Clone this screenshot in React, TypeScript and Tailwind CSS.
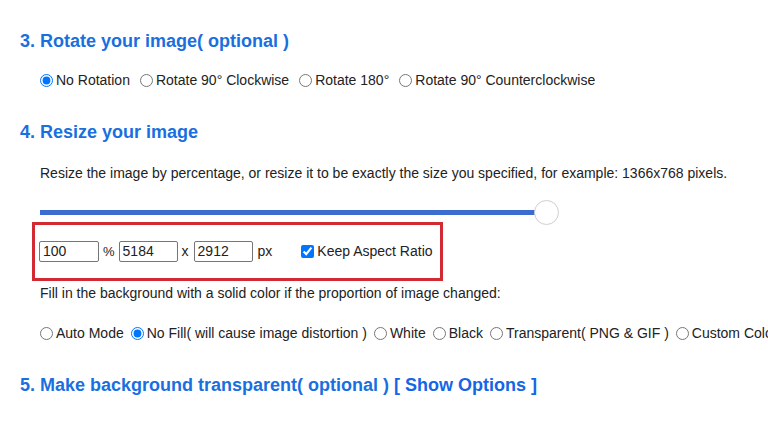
import React from "react";

const rotations = [
  { label: "No Rotation", checked: true },
  { label: "Rotate 90° Clockwise" },
  { label: "Rotate 180°" },
  { label: "Rotate 90° Counterclockwise" },
];

const fills = [
  { label: "Auto Mode" },
  { label: "No Fill( will cause image distortion )", checked: true },
  { label: "White" },
  { label: "Black" },
  { label: "Transparent( PNG & GIF )" },
  { label: "Custom Color" },
];

const Radio: React.FC<{ label: string; checked?: boolean; name: string }> = ({ label, checked, name }) => (
  <label className="flex items-center whitespace-nowrap">
    <input type="radio" name={name} defaultChecked={checked} className="m-0 w-[13px] h-[13px] mr-[3px]" />
    <span>{label}</span>
  </label>
);

const App: React.FC = () => {
  return (
    <div className="w-[768px] h-[432px] overflow-hidden bg-white text-[#222] pl-[20px] font-['Liberation_Sans',Arial,sans-serif]">
      {/* 3 */}
      <h3 className="mt-[30px] text-[18px] leading-[22px] font-bold text-[#1a6fe0]">3. Rotate your image( optional )</h3>
      <div className="mt-[20px] ml-[20px] flex gap-[10px] text-[14px] leading-[16px]">
        {rotations.map((r, i) => (
          <Radio key={i} name="rot" label={r.label} checked={r.checked} />
        ))}
      </div>

      {/* 4 */}
      <h3 className="mt-[33px] text-[18px] leading-[22px] font-bold text-[#1a6fe0]">4. Resize your image</h3>
      <p className="mt-[22px] ml-[20px] text-[14px] leading-[16px] whitespace-nowrap">
        Resize the image by percentage, or resize it to be exactly the size you specified, for example: 1366x768 pixels.
      </p>

      <div className="mt-[29px] ml-[20px] w-[505px] h-[5px] bg-[#3b6dd0] relative">
        <div className="absolute left-[494px] top-[-10px] w-[25px] h-[25px] rounded-full bg-white border-[1.5px] border-[#cfcfcf]" />
      </div>

      <div className="mt-[7px] ml-[12px] w-[411px] h-[59px] border-[3px] border-[#d12a33] flex items-center pl-[4px] text-[14px]">
        <input defaultValue="100" className="w-[60px] h-[21px] border border-[#767676] rounded-[2px] px-[3px] text-[14px]" />
        <span className="ml-[4px] mr-[4px] text-[13px]">%</span>
        <input defaultValue="5184" className="w-[59px] h-[21px] border border-[#767676] rounded-[2px] px-[3px] text-[14px]" />
        <span className="ml-[4px] mr-[5px]">x</span>
        <input defaultValue="2912" className="w-[59px] h-[21px] border border-[#767676] rounded-[2px] px-[3px] text-[14px]" />
        <span className="ml-[5px]">px</span>
        <label className="flex items-center ml-[29px]">
          <input type="checkbox" defaultChecked className="m-0 w-[13px] h-[13px] mr-[3px]" />
          <span>Keep Aspect Ratio</span>
        </label>
      </div>

      <p className="mt-[4px] ml-[20px] text-[14px] leading-[16px] whitespace-nowrap">
        Fill in the background with a solid color if the proportion of image changed:
      </p>
      <div className="mt-[24px] ml-[20px] flex gap-[7px] text-[14px] leading-[16px]">
        {fills.map((f, i) => (
          <Radio key={i} name="fill" label={f.label} checked={f.checked} />
        ))}
      </div>

      {/* 5 */}
      <h3 className="mt-[33px] text-[18px] leading-[22px] font-bold text-[#1a6fe0] whitespace-nowrap">
        5. Make background transparent( optional ) <span className="text-[#1565e6]">[ Show Options ]</span>
      </h3>
    </div>
  );
};

export default App;
